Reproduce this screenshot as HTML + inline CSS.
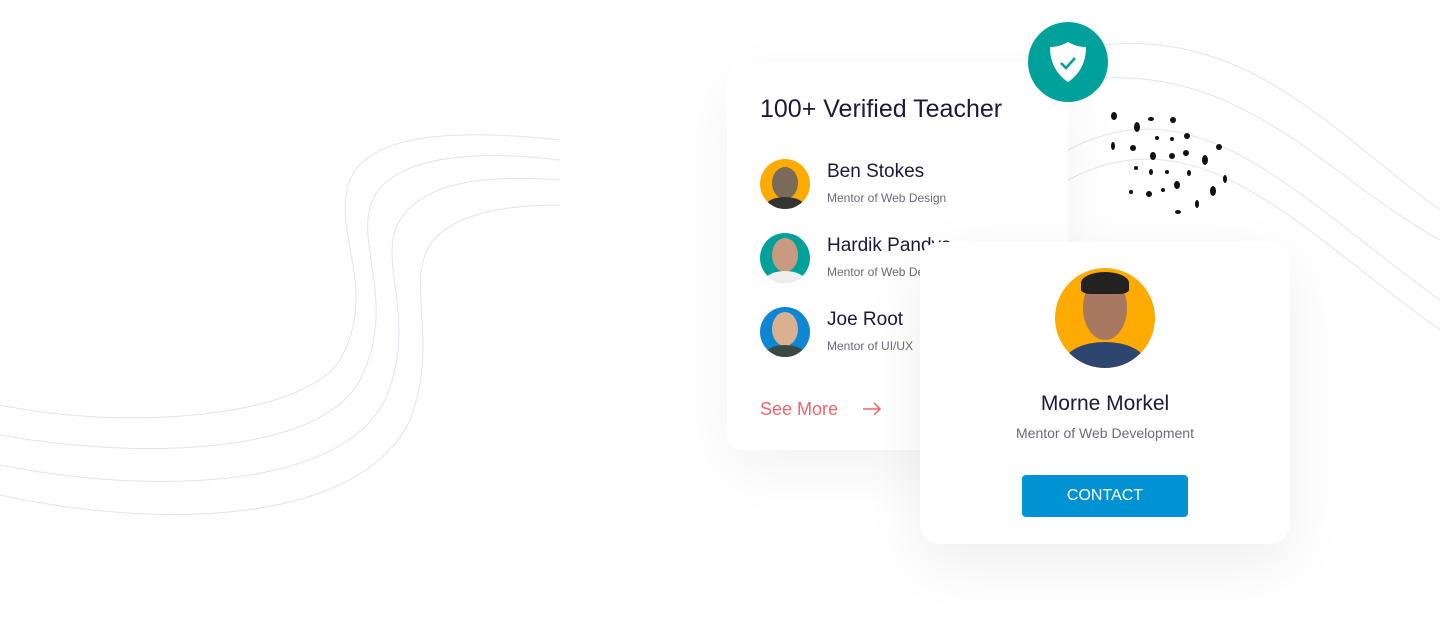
<!DOCTYPE html>
<html><head><meta charset="utf-8"><style>
*{margin:0;padding:0;box-sizing:border-box}
body{width:1440px;height:642px;background:#fff;position:relative;overflow:hidden;font-family:"Liberation Sans",sans-serif}
.card{position:absolute;background:#fff;border-radius:16px}
#c1{left:727px;top:62px;width:341px;height:388px;box-shadow:0 20px 60px rgba(0,0,0,0.05)}
#c2{left:920px;top:242px;width:370px;height:302px;border-radius:20px;box-shadow:0 20px 60px rgba(0,0,0,0.07)}
.t{position:absolute;white-space:nowrap}
.av{position:absolute;width:50px;height:50px;border-radius:50%;overflow:hidden}
</style></head><body>
<svg width="1440" height="642" style="position:absolute;left:0;top:0" fill="none" stroke="#e4e2f2" stroke-width="1">
<path d="M0 405 C120 430 300 420 340 360 C380 290 330 230 350 180 C370 130 470 130 560 140"/>
<path d="M0 435 C140 460 320 455 360 380 C400 300 350 240 375 195 C400 155 480 150 560 160"/>
<path d="M0 465 C150 495 340 490 385 400 C420 320 375 260 400 220 C425 180 490 175 560 180"/>
<path d="M0 495 C160 530 360 525 410 420 C440 340 405 285 430 245 C450 215 500 205 560 205"/>
<path d="M1100 45 C1250 30 1330 130 1440 210"/>
<path d="M1100 78 C1250 70 1330 180 1440 240"/>
<path d="M1068 150 C1200 80 1300 200 1440 300"/>
<path d="M1068 180 C1200 110 1300 230 1440 330"/>
</svg>
<div class="card" id="c1">
<div class="t" style="left:33px;top:33px;font-size:25px;color:#1b1a3a">100+ Verified Teacher</div>
<div class="av" style="left:33px;top:97px;background:#fdab00"><div style="position:absolute;left:12px;top:8px;width:26px;height:32px;border-radius:50%;background:#7a6a5a"></div><div style="position:absolute;left:5px;top:38px;width:40px;height:20px;border-radius:50%;background:#333"></div></div>
<div class="t" style="left:100px;top:99px;font-size:19px;color:#1b1a3a">Ben Stokes</div>
<div class="t" style="left:100px;top:129px;font-size:12px;color:#6b6b7b">Mentor of Web Design</div>
<div class="av" style="left:33px;top:171px;background:#00a19a"><div style="position:absolute;left:12px;top:5px;width:26px;height:34px;border-radius:50%;background:#c99a80"></div><div style="position:absolute;left:5px;top:38px;width:40px;height:20px;border-radius:50%;background:#eee"></div></div>
<div class="t" style="left:100px;top:173px;font-size:19px;color:#1b1a3a">Hardik Pandya</div>
<div class="t" style="left:100px;top:203px;font-size:12px;color:#6b6b7b">Mentor of Web Design</div>
<div class="av" style="left:33px;top:245px;background:#0e86d4"><div style="position:absolute;left:12px;top:5px;width:26px;height:34px;border-radius:50%;background:#d9b090"></div><div style="position:absolute;left:5px;top:38px;width:40px;height:20px;border-radius:50%;background:#3a4a40"></div></div>
<div class="t" style="left:100px;top:247px;font-size:19px;color:#1b1a3a">Joe Root</div>
<div class="t" style="left:100px;top:277px;font-size:12px;color:#6b6b7b">Mentor of UI/UX</div>
<div class="t" style="left:33px;top:337px;font-size:18px;color:#f5636a">See More</div>
<svg style="position:absolute;left:135px;top:339px" width="20" height="16" fill="none" stroke="#f5636a" stroke-width="1.5"><path d="M1 8H18M12 2L18 8L12 14"/></svg>
</div>
<div style="position:absolute;left:1028px;top:22px;width:80px;height:80px;border-radius:50%;background:#00a19a"></div>
<svg style="position:absolute;left:1048px;top:40px" width="40" height="44"><path d="M20 2 C27 6 33 7 38 7 C38 22 32 34 20 42 C8 34 2 22 2 7 C7 7 13 6 20 2Z" fill="#fff"/><path d="M13 23 L18 28 L27 18" stroke="#00a19a" stroke-width="2.5" fill="none"/></svg>
<svg style="position:absolute;left:1100px;top:105px" width="140" height="120" fill="#111">
<ellipse cx="14" cy="11" rx="3" ry="4"/><ellipse cx="37" cy="22" rx="3" ry="5"/><ellipse cx="51" cy="14" rx="3" ry="2"/><ellipse cx="73" cy="15" rx="3" ry="3"/>
<ellipse cx="13" cy="41" rx="2" ry="4"/><ellipse cx="33" cy="43" rx="3" ry="3"/><ellipse cx="57" cy="33" rx="2" ry="2"/><ellipse cx="72" cy="34" rx="2" ry="2"/><ellipse cx="87" cy="31" rx="3" ry="3"/><ellipse cx="119" cy="42" rx="3" ry="3"/>
<ellipse cx="53" cy="51" rx="3" ry="4"/><ellipse cx="72" cy="51" rx="3" ry="3"/><ellipse cx="86" cy="48" rx="3" ry="3"/><ellipse cx="105" cy="55" rx="3" ry="5"/>
<ellipse cx="36" cy="63" rx="2" ry="2"/><ellipse cx="51" cy="67" rx="2" ry="3"/><ellipse cx="67" cy="67" rx="2" ry="2"/><ellipse cx="89" cy="68" rx="2" ry="3"/><ellipse cx="125" cy="74" rx="2" ry="4"/>
<ellipse cx="31" cy="87" rx="2" ry="2"/><ellipse cx="49" cy="89" rx="3" ry="3"/><ellipse cx="63" cy="85" rx="2" ry="2"/><ellipse cx="77" cy="80" rx="3" ry="4"/><ellipse cx="113" cy="86" rx="3" ry="5"/>
<ellipse cx="97" cy="99" rx="2" ry="4"/><ellipse cx="78" cy="107" rx="3" ry="2"/>
</svg>
<div class="card" id="c2">
<div style="position:absolute;left:135px;top:26px;width:100px;height:100px;border-radius:50%;background:#fdab00;overflow:hidden"><div style="position:absolute;left:28px;top:8px;width:44px;height:64px;border-radius:50%;background:#a87860"></div><div style="position:absolute;left:26px;top:4px;width:48px;height:22px;border-radius:50% 50% 20% 20%;background:#222"></div><div style="position:absolute;left:10px;top:74px;width:80px;height:40px;border-radius:50%;background:#2e4570"></div></div>
<div class="t" style="left:0;width:370px;text-align:center;top:150px;font-size:21px;color:#1b1a3a">Morne Morkel</div>
<div class="t" style="left:0;width:370px;text-align:center;top:183px;font-size:14px;color:#6b6b7b">Mentor of Web Development</div>
<div style="position:absolute;left:102px;top:233px;width:166px;height:42px;border-radius:4px;background:#0092d2;color:#fff;font-size:16px;text-align:center;line-height:42px">CONTACT</div>
</div>
</body></html>
